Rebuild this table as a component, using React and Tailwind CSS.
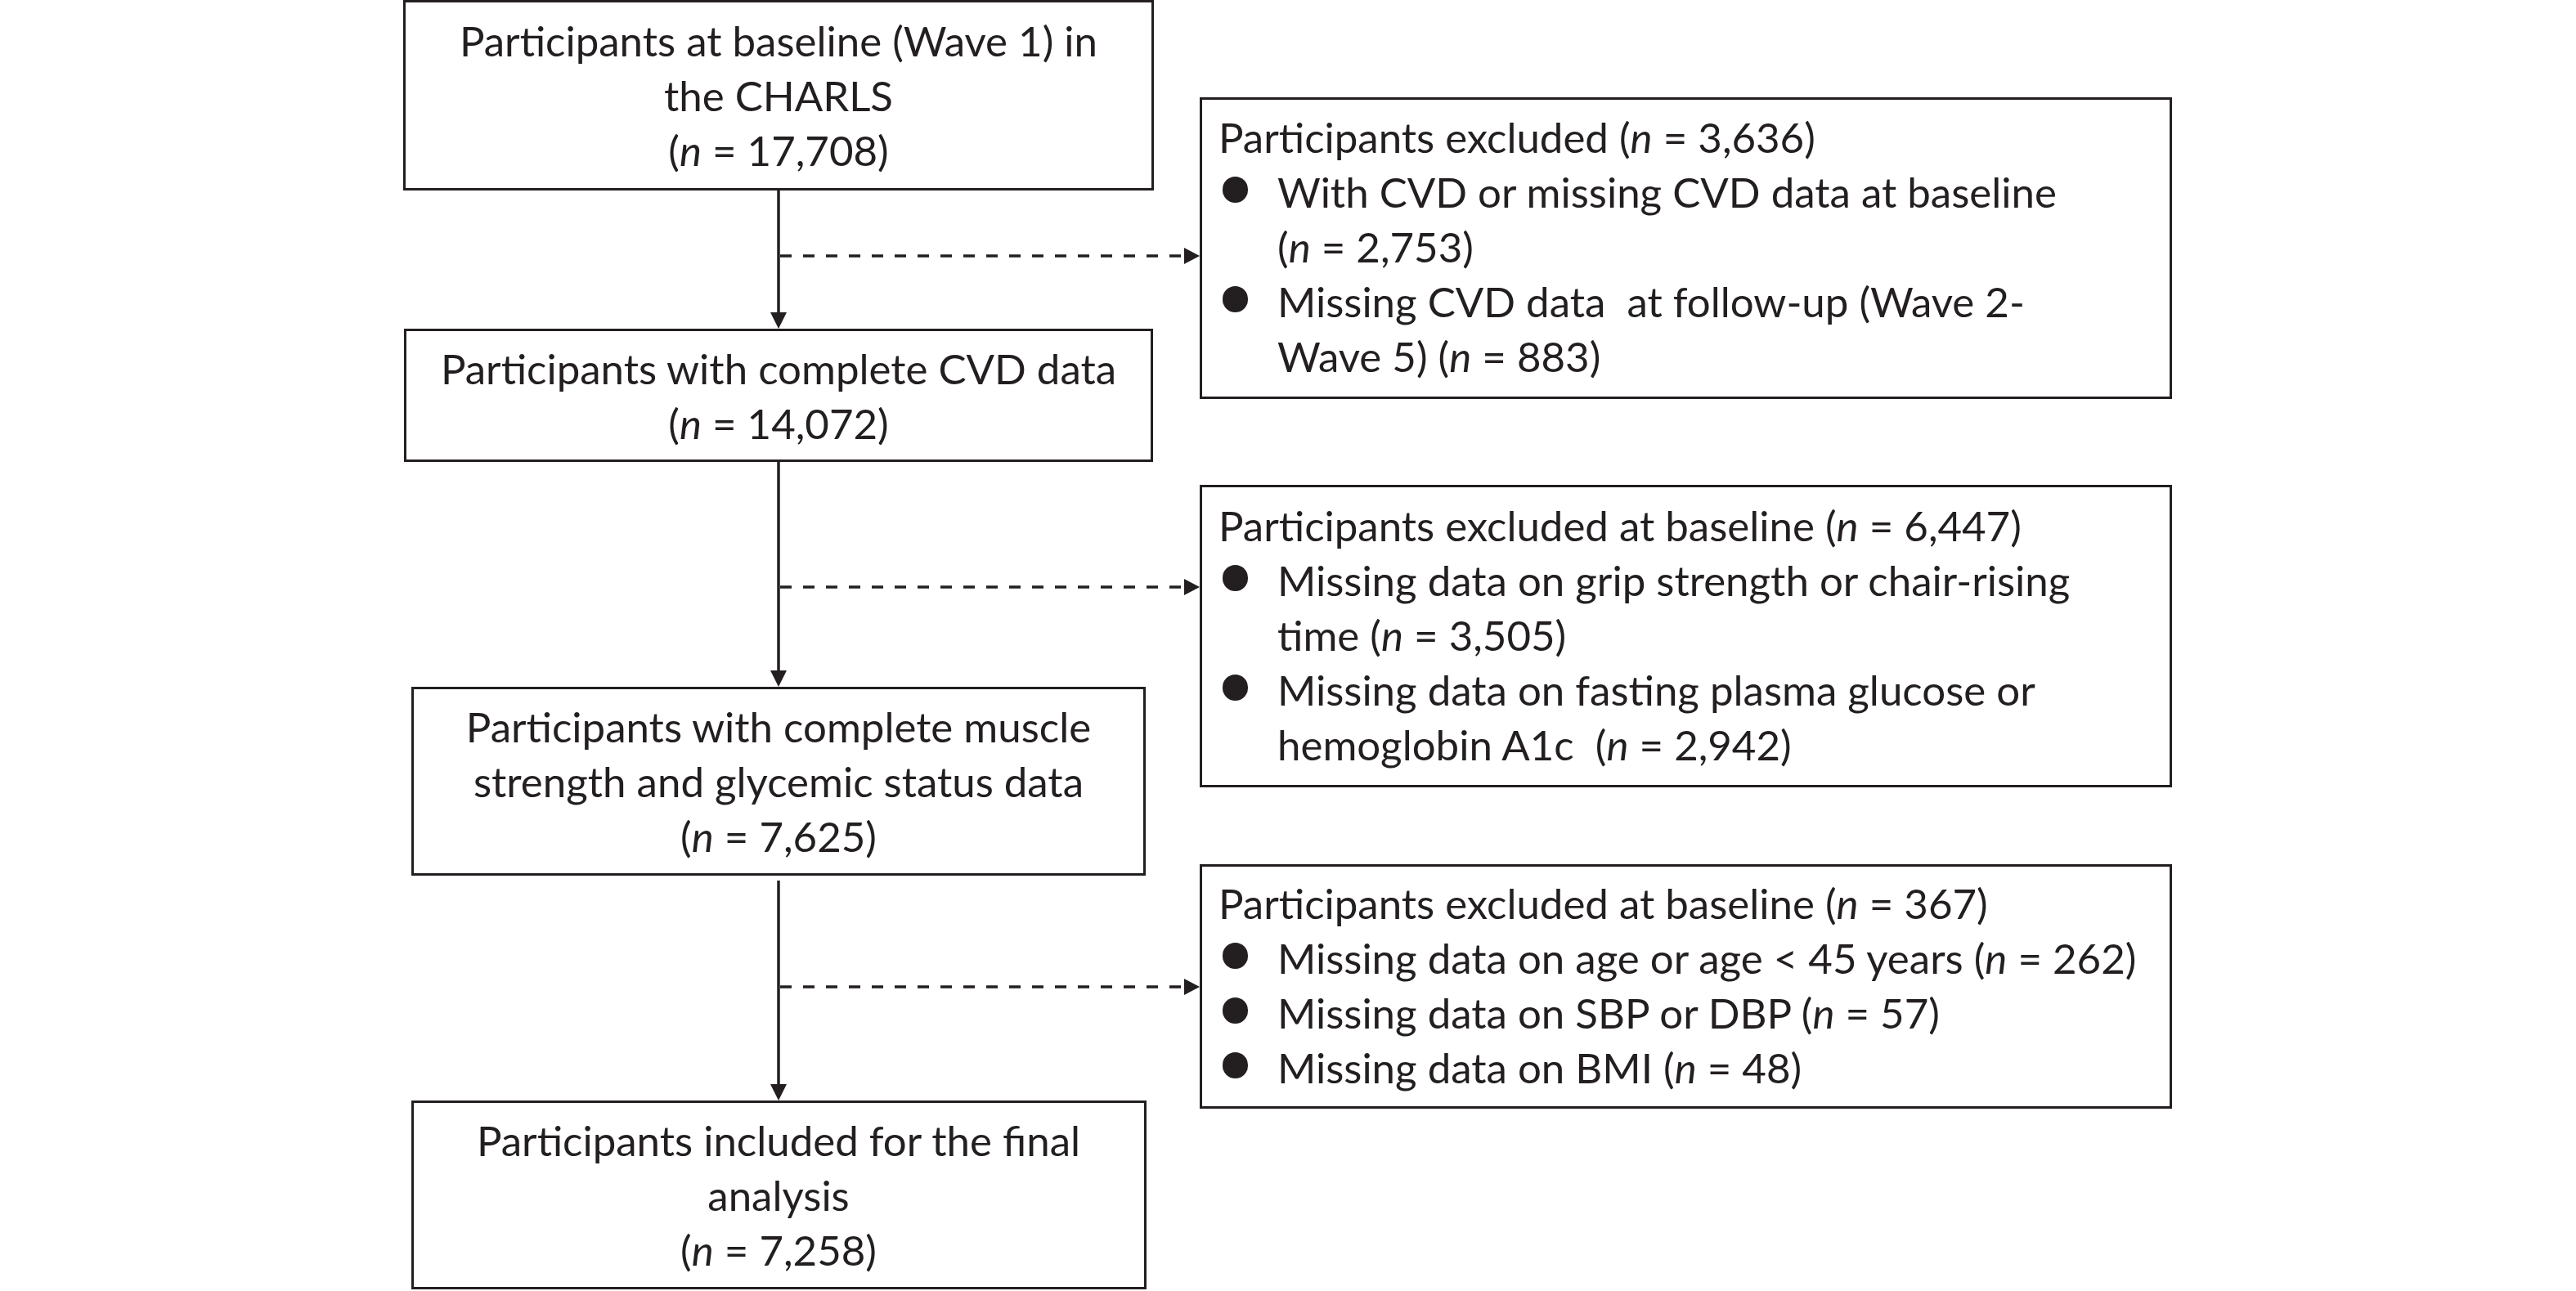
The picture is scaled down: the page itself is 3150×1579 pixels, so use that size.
import React from 'react';

const N = () => <i>n</i>;

function FlowBox({ className, children }) {
  return (
    <div className={`border-[3px] border-[#231f20] flex flex-col items-center justify-center text-center ${className}`}>
      {children}
    </div>
  );
}

// vertical arrow between two boxes, optionally with a dashed branch to the right
function DownArrow({ h, startGap = 0, dashTop }) {
  return (
    <div className="relative w-full flex justify-center" style={{ height: h }}>
      <svg width="22" height={h} viewBox={`0 0 22 ${h}`} className="block">
        <line x1="11" y1={startGap} x2="11" y2={h - 18} stroke="#231f20" strokeWidth="3.5" />
        <polygon points={`1,${h - 20} 21,${h - 20} 11,${h}`} fill="#231f20" />
      </svg>
      {dashTop !== undefined && (
        <svg
          width="515"
          height="22"
          viewBox="0 0 515 22"
          className="absolute left-[460px] block"
          style={{ top: dashTop - 11 }}
        >
          <line x1="2" y1="11" x2="497" y2="11" stroke="#231f20" strokeWidth="3.5" strokeDasharray="14 14" />
          <polygon points="496,1 515,11 496,21" fill="#231f20" />
        </svg>
      )}
    </div>
  );
}

function ExcludeBox({ className, title, items }) {
  return (
    <div className={`border-[3px] border-[#231f20] pl-[20px] ${className}`}>
      <div className="whitespace-pre">{title}</div>
      {items.map((lines, i) => (
        <div key={i} className="flex">
          <div className="w-[72px] shrink-0">
            <div className="ml-[5px] mt-[15px] w-[31px] h-[32px] rounded-full bg-[#231f20]" />
          </div>
          <div>
            {lines.map((l, j) => (
              <div key={j} className="whitespace-pre">{l}</div>
            ))}
          </div>
        </div>
      ))}
    </div>
  );
}

export default function App() {
  return (
    <div className="w-[3150px] h-[1579px] bg-white flex items-start text-[#231f20] font-['Lato',sans-serif] text-[51px] leading-[67px]">
      {/* main flow */}
      <div className="ml-[492px] w-[920px] flex flex-col items-center">
        <FlowBox className="w-[918px] h-[233px]">
          <div className="whitespace-nowrap">Participants at baseline (Wave 1) in</div>
          <div>the CHARLS</div>
          <div>(<N /> = 17,708)</div>
        </FlowBox>
        <DownArrow h={169} dashTop={80} />
        <FlowBox className="w-[916px] h-[163px]">
          <div className="whitespace-nowrap">Participants with complete CVD data</div>
          <div>(<N /> = 14,072)</div>
        </FlowBox>
        <DownArrow h={275} dashTop={153} />
        <FlowBox className="w-[898px] h-[231px]">
          <div className="whitespace-nowrap">Participants with complete muscle</div>
          <div className="whitespace-nowrap">strength and glycemic status data</div>
          <div>(<N /> = 7,625)</div>
        </FlowBox>
        <DownArrow h={275} startGap={6} dashTop={136} />
        <FlowBox className="w-[899px] h-[231px]">
          <div className="whitespace-nowrap">Participants included for the final</div>
          <div>analysis</div>
          <div>(<N /> = 7,258)</div>
        </FlowBox>
      </div>

      {/* exclusions */}
      <div className="ml-[55px] w-[1189px] flex flex-col">
        <ExcludeBox
          className="mt-[119px] h-[369px] pt-[12px]"
          title={<>Participants excluded (<N /> = 3,636)</>}
          items={[
            ['With CVD or missing CVD data at baseline', <>(<N /> = 2,753)</>],
            ['Missing CVD data  at follow-up (Wave 2-', <>Wave 5) (<N /> = 883)</>],
          ]}
        />
        <ExcludeBox
          className="mt-[105px] h-[370px] pt-[13px]"
          title={<>Participants excluded at baseline (<N /> = 6,447)</>}
          items={[
            ['Missing data on grip strength or chair-rising', <>time (<N /> = 3,505)</>],
            ['Missing data on fasting plasma glucose or', <>hemoglobin A1c  (<N /> = 2,942)</>],
          ]}
        />
        <ExcludeBox
          className="mt-[94px] h-[299px] pt-[11px]"
          title={<>Participants excluded at baseline (<N /> = 367)</>}
          items={[
            [<>Missing data on age or age &lt; 45 years (<N /> = 262)</>],
            [<>Missing data on SBP or DBP (<N /> = 57)</>],
            [<>Missing data on BMI (<N /> = 48)</>],
          ]}
        />
      </div>
    </div>
  );
}
